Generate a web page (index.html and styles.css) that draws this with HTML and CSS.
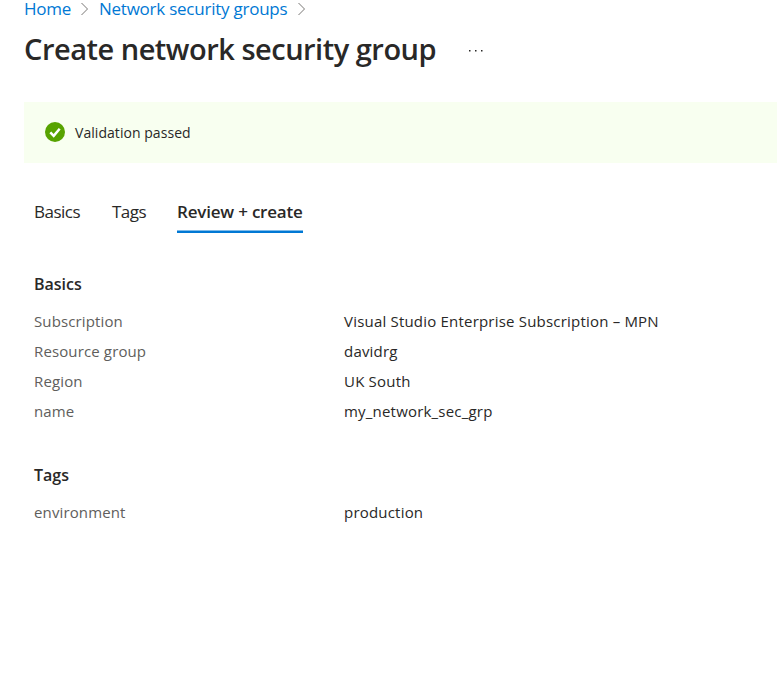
FILE: index.html
```html
<!DOCTYPE html>
<html lang="en">
<head>
<meta charset="utf-8">
<title>Create network security group</title>
<link rel="stylesheet" href="styles.css">
</head>
<body>
<nav class="breadcrumb" aria-label="Breadcrumb">
  <a class="home" href="#">Home</a>
  <svg class="chevron" viewBox="0 0 8 14"><path d="M0.5 1l6 6-6 6"/></svg>
  <a class="parent" href="#">Network security groups</a>
  <svg class="chevron" viewBox="0 0 8 14"><path d="M0.5 1l6 6-6 6"/></svg>
</nav>
<header class="page-header">
  <h1>Create network security group</h1>
  <svg class="more" viewBox="0 0 14 2"><path d="M0 0h1.5v1.5H0zM6 0h1.5v1.5H6zM12 0h1.5v1.5H12z"/></svg>
</header>
<div class="banner" role="status">
  <svg class="check" viewBox="0 0 20 20"><circle cx="10" cy="10" r="10"/><path d="M5.3 10.3l3.4 3.6 6-7.2"/></svg>
  <span>Validation passed</span>
</div>
<main>
  <nav class="tabs">
    <a class="tab" href="#">Basics</a>
    <a class="tab tab-tags" href="#">Tags</a>
    <a class="tab selected" href="#">Review + create</a>
  </nav>
  <section>
    <h2>Basics</h2>
    <dl>
      <dt>Subscription</dt><dd>Visual Studio Enterprise Subscription – MPN</dd>
      <dt>Resource group</dt><dd>davidrg</dd>
      <dt>Region</dt><dd>UK South</dd>
      <dt>name</dt><dd>my_network_sec_grp</dd>
    </dl>
  </section>
  <section>
    <h2>Tags</h2>
    <dl>
      <dt>environment</dt><dd>production</dd>
    </dl>
  </section>
</main>
</body>
</html>
```
FILE: styles.css
```css
* { box-sizing: border-box; }
body {
  margin: 0;
  background: #fff;
  color: #292827;
  font-family: "Open Sans", "Noto Sans", sans-serif;
  font-size: 15px;
}
a { color: inherit; text-decoration: none; }
h1, h2, dl, dd { margin: 0; }
.breadcrumb {
  display: flex;
  align-items: center;
  height: 18px;
  padding-left: 24px;
  color: #0078d4;
  font-size: 17px;
  line-height: 18px;
}
.home { width: 47px; letter-spacing: -0.25px; white-space: nowrap; }
.parent { width: 189px; letter-spacing: -0.24px; white-space: nowrap; }
.chevron {
  width: 8px;
  height: 14px;
  margin: 0 10px;
  fill: none;
  stroke: #797775;
}
.page-header {
  display: flex;
  align-items: center;
  height: 63px;
  padding-left: 24px;
}
h1 { width: 412px; font-size: 29px; font-weight: 570; line-height: 40px; letter-spacing: -0.49px; white-space: nowrap; margin-top: -1px; }
.more { width: 14px; height: 2px; margin: 3px 0 0 33px; fill: #292827; }
.banner {
  display: flex;
  align-items: center;
  gap: 10px;
  height: 61px;
  margin: 21px 0 0 24px;
  padding-left: 21px;
  background: #f8fff0;
  font-size: 14px;
  letter-spacing: 0.05px;
}
.check { width: 20px; height: 20px; margin-top: -2px; fill: #57a300; }
.check path { fill: none; stroke: #fff; stroke-width: 2.5; }
main { padding-left: 34px; }
.tabs {
  display: flex;
  height: 70px;
  align-items: flex-end;
  font-size: 17px;
}
.tab { width: 46px; height: 43px; margin-right: 32px; line-height: 44px; letter-spacing: -0.5px; white-space: nowrap; }
.tab-tags { width: 33px; }
.selected {
  width: 126px;
  font-weight: 570;
  letter-spacing: -0.2px;
  background: linear-gradient(#80bcea 1px, #0078d4 1px) bottom / 100% 3px no-repeat;
}
h2 { margin-top: 36px; font-size: 16px; font-weight: 600; line-height: 30px; }
dl { display: grid; grid-template-columns: 310px 1fr; grid-auto-rows: 30px; line-height: 30px; margin-top: 7px; letter-spacing: 0.2px; }
section + section h2 { margin-top: 34px; }
dt { color: #605e5c; letter-spacing: 0.13px; }
```
